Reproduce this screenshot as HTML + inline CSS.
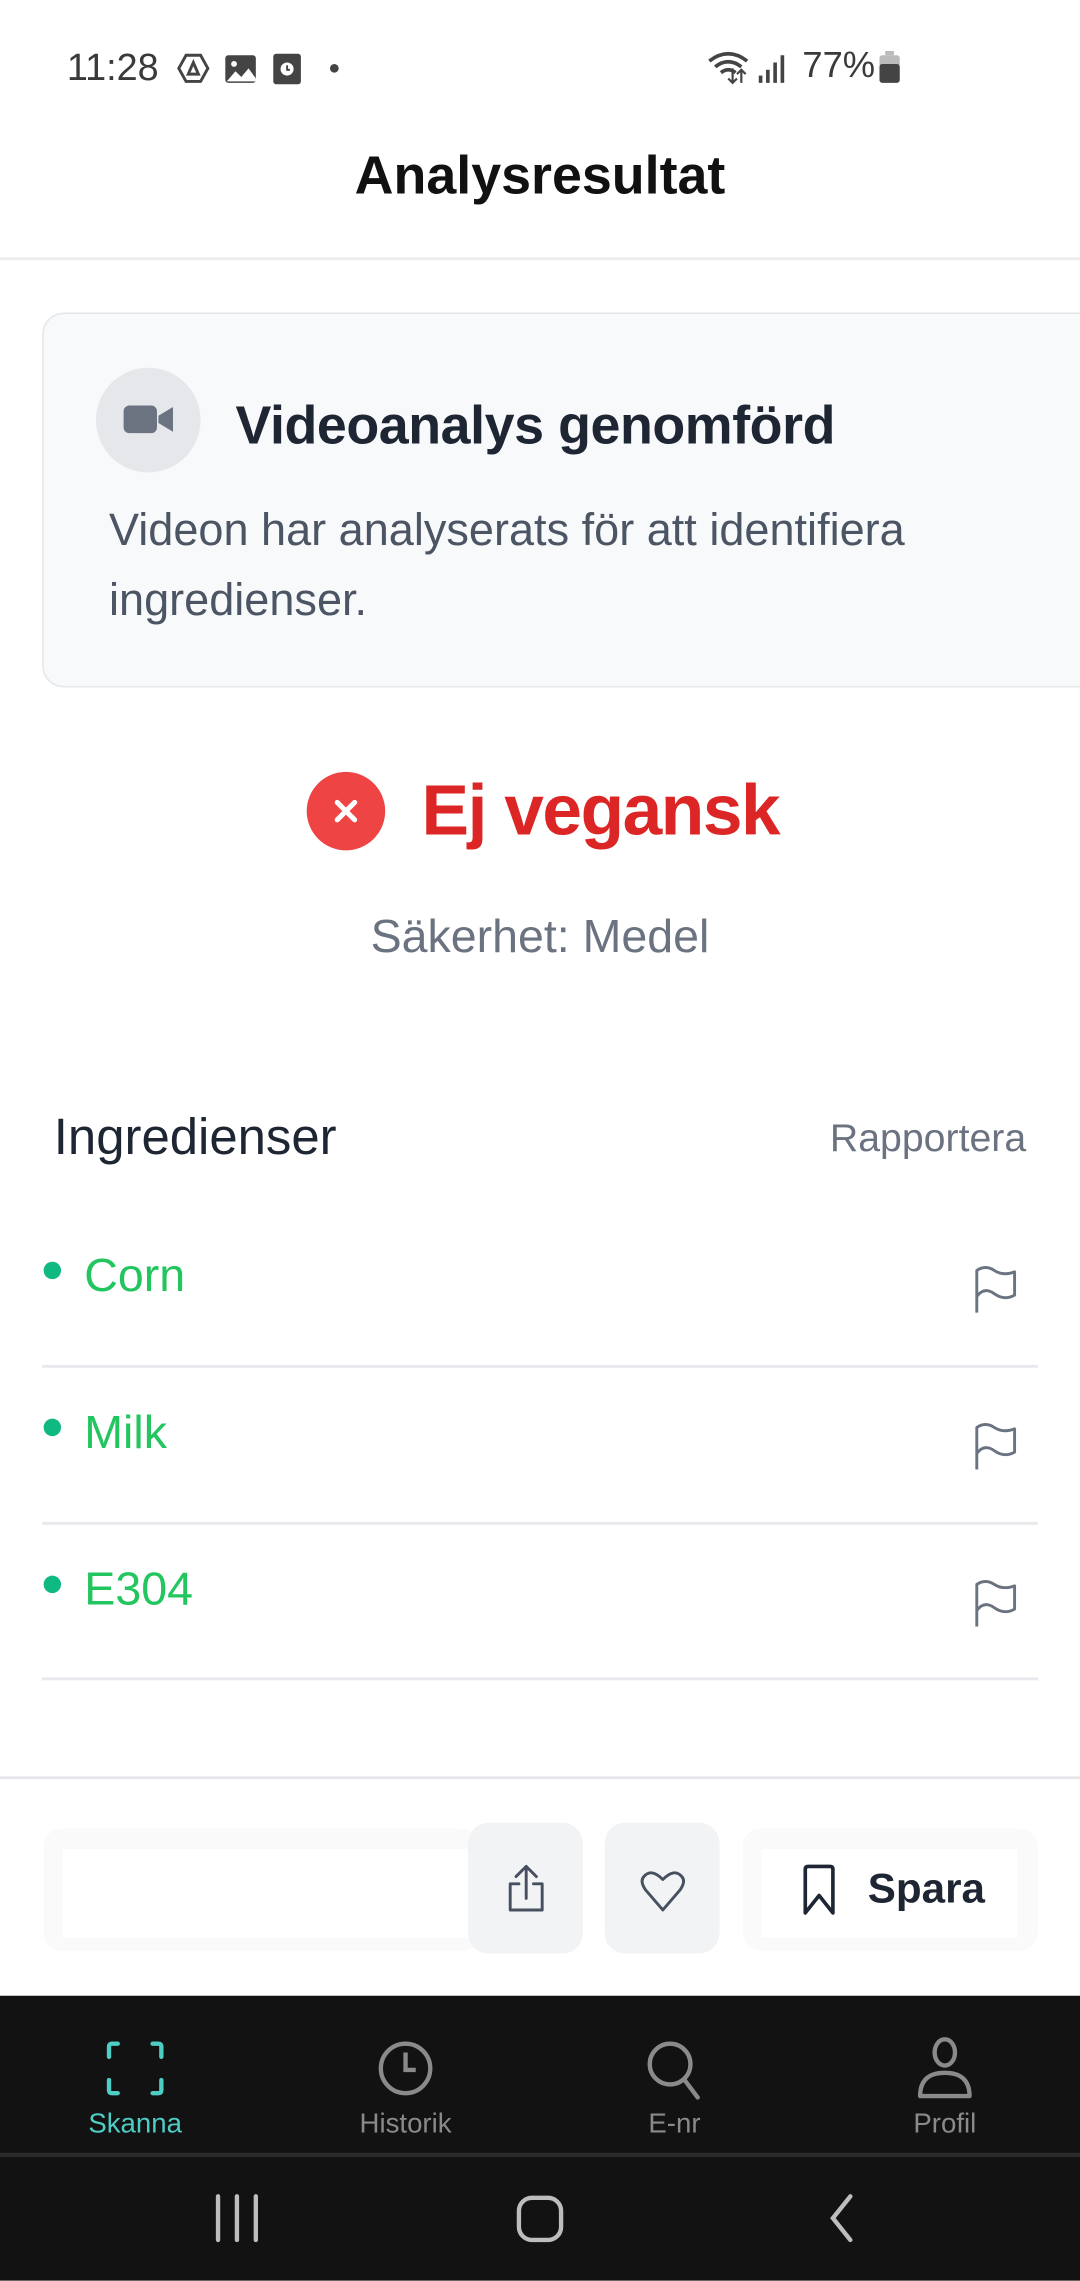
<!DOCTYPE html>
<html><head><meta charset="utf-8"><style>
html,body{margin:0;padding:0;background:#fff;}
body{width:1080px;height:2280px;overflow:hidden;position:relative;font-family:"Liberation Sans",sans-serif;}
#s{position:absolute;left:0;top:0;width:743px;height:1569px;transform:scale(1.45357);transform-origin:0 0;}
.a{position:absolute;white-space:nowrap;}
</style></head><body><div id="s">
<!-- status bar -->
<div class="a" style="left:46px;top:31px;font-size:26px;color:#3a3a3a;">11:28</div>
<svg class="a" style="left:121px;top:35px" width="120" height="24" viewBox="0 0 120 24">
<path d="M7 3 L17 3 L22 12 L17 21 L7 21 L2 12 Z" fill="none" stroke="#444" stroke-width="2"/><path d="M12 8 L15.5 16 L8.5 16 Z" fill="none" stroke="#444" stroke-width="2"/>
<rect x="34" y="3" width="21" height="19" rx="2" fill="#444"/><circle cx="40" cy="9" r="2" fill="#fff"/><path d="M35 21 L41 14 L45 18 L50 12 L55 19 L55 21 Z" fill="#fff"/>
<rect x="67" y="2" width="19" height="21" rx="2" fill="#444"/><circle cx="76.5" cy="12.5" r="4.5" fill="#fff"/><path d="M76.5 10v3h2" stroke="#444" stroke-width="1.3" fill="none"/>
<circle cx="109" cy="12" r="3" fill="#444"/></svg>
<svg class="a" style="left:486px;top:33px" width="60" height="26" viewBox="0 0 60 26">
<path d="M2 9 Q15 -1 28 9" stroke="#444" stroke-width="2.5" fill="none"/><path d="M6 13 Q15 6 24 13" stroke="#444" stroke-width="2.5" fill="none"/><path d="M10 17 Q15 13 20 17" stroke="#444" stroke-width="2.5" fill="none"/>
<path d="M18 14v10M15 21l3 3 3-3M24 24v-9M21 18l3-3 3 3" stroke="#444" stroke-width="1.5" fill="none"/>
<rect x="36" y="19" width="2.5" height="5" fill="#444"/><rect x="41" y="15" width="2.5" height="9" fill="#444"/><rect x="46" y="10" width="2.5" height="14" fill="#444"/><rect x="51" y="5" width="2.5" height="19" fill="#444"/></svg>
<div class="a" style="left:552px;top:31px;font-size:25px;color:#3a3a3a;">77%</div>
<svg class="a" style="left:605px;top:35px" width="16" height="24"><rect x="4" y="0" width="6" height="3" fill="#bbb"/><rect x="0" y="3" width="14" height="8" rx="2" fill="#bbb"/><rect x="0" y="9" width="14" height="13" rx="2" fill="#444"/></svg>
<!-- header -->
<div class="a" style="left:0;width:743px;text-align:center;top:100px;font-size:37px;font-weight:bold;color:#111;">Analysresultat</div>
<div class="a" style="left:0;top:177px;width:743px;height:2px;background:#ececef;"></div>
<!-- card -->
<div class="a" style="left:29px;top:215px;width:760px;height:256px;border:1.5px solid #e3e5e9;border-radius:15px;background:#f8f9fb;"></div>
<div class="a" style="left:66px;top:253px;width:72px;height:72px;border-radius:50%;background:#e5e7eb;"></div>
<svg class="a" style="left:85px;top:277px" width="36" height="24"><rect x="0" y="2" width="23" height="19" rx="4" fill="#6b7280"/><path d="M24 9 L34 3 L34 20 L24 14 Z" fill="#6b7280"/></svg>
<div class="a" style="left:162px;top:272px;font-size:37px;font-weight:bold;color:#1e2533;letter-spacing:-0.3px;">Videoanalys genomförd</div>
<div class="a" style="left:75px;top:341px;font-size:31px;line-height:48px;color:#4b5563;white-space:normal;width:640px;">Videon har analyserats för att identifiera ingredienser.</div>
<!-- verdict -->
<div class="a" style="left:211px;top:531px;width:54px;height:54px;border-radius:50%;background:#ef4444;"></div>
<svg class="a" style="left:211px;top:531px" width="54" height="54"><path d="M21 21L33 33M33 21L21 33" stroke="#fff" stroke-width="3.5" stroke-linecap="round"/></svg>
<div class="a" style="left:290px;top:530px;font-size:49px;font-weight:bold;color:#dc2626;letter-spacing:-1px;">Ej vegansk</div>
<div class="a" style="left:0;width:743px;text-align:center;top:626px;font-size:32px;color:#6b7280;">Säkerhet: Medel</div>
<!-- ingredients -->
<div class="a" style="left:37px;top:763px;font-size:35px;color:#1e2533;">Ingredienser</div>
<div class="a" style="right:37px;top:768px;font-size:27px;color:#6b7280;">Rapportera</div>

<div class="a" style="left:30px;top:868px;width:12px;height:12px;border-radius:50%;background:#10b981;"></div>
<div class="a" style="left:58px;top:859px;font-size:32px;color:#22c55e;">Corn</div>
<svg class="a" style="left:668px;top:870px" width="34" height="34" viewBox="0 0 34 34"><path d="M4 33V4Q10 0 16 4T30 5V21Q23 25 16 20T4 22" fill="none" stroke="#6b7280" stroke-width="2" stroke-linejoin="round"/></svg>
<div class="a" style="left:29px;top:939px;width:685px;height:1.5px;background:#e8e9ec;"></div>

<div class="a" style="left:30px;top:976px;width:12px;height:12px;border-radius:50%;background:#10b981;"></div>
<div class="a" style="left:58px;top:967px;font-size:32px;color:#22c55e;">Milk</div>
<svg class="a" style="left:668px;top:978px" width="34" height="34" viewBox="0 0 34 34"><path d="M4 33V4Q10 0 16 4T30 5V21Q23 25 16 20T4 22" fill="none" stroke="#6b7280" stroke-width="2" stroke-linejoin="round"/></svg>
<div class="a" style="left:29px;top:1047px;width:685px;height:1.5px;background:#e8e9ec;"></div>

<div class="a" style="left:30px;top:1084px;width:12px;height:12px;border-radius:50%;background:#10b981;"></div>
<div class="a" style="left:58px;top:1075px;font-size:32px;color:#22c55e;">E304</div>
<svg class="a" style="left:668px;top:1086px" width="34" height="34" viewBox="0 0 34 34"><path d="M4 33V4Q10 0 16 4T30 5V21Q23 25 16 20T4 22" fill="none" stroke="#6b7280" stroke-width="2" stroke-linejoin="round"/></svg>
<div class="a" style="left:29px;top:1154px;width:685px;height:1.5px;background:#e8e9ec;"></div>

<div class="a" style="left:0;top:1222px;width:743px;height:2px;background:#e5e7eb;"></div>
<!-- action bar -->
<div class="a" style="left:30px;top:1258px;width:300px;height:84px;border-radius:12px;background:#fafafa;"></div>
<div class="a" style="left:43px;top:1272px;width:285px;height:61px;background:#fff;"></div>
<div class="a" style="left:322px;top:1254px;width:79px;height:90px;border-radius:14px;background:#f2f3f5;"></div>
<svg class="a" style="left:346px;top:1282px" width="32" height="36" viewBox="0 0 32 36"><path d="M16 24V2M9 9L16 2L23 9M11 14H5V32H27V14H21" fill="none" stroke="#475060" stroke-width="2" stroke-linejoin="round" stroke-linecap="round"/></svg>
<div class="a" style="left:416px;top:1254px;width:79px;height:90px;border-radius:14px;background:#f2f3f5;"></div>
<svg class="a" style="left:440px;top:1286px" width="32" height="30" viewBox="0 0 32 30"><path d="M16 28L4 14Q0 8 3 5Q8 -1 16 7Q24 -1 29 5Q32 8 28 14Z" fill="none" stroke="#475060" stroke-width="2" stroke-linejoin="round"/></svg>
<div class="a" style="left:511px;top:1258px;width:203px;height:84px;border-radius:12px;background:#fafafa;"></div>
<div class="a" style="left:524px;top:1272px;width:176px;height:61px;background:#fff;"></div>
<svg class="a" style="left:551px;top:1282px" width="26" height="36" viewBox="0 0 26 36"><path d="M3 34V4Q3 2 5 2H20Q22 2 22 4V34L12.5 22Z" fill="none" stroke="#1e2533" stroke-width="2.5" stroke-linejoin="round"/></svg>
<div class="a" style="left:597px;top:1284px;font-size:29px;font-weight:bold;color:#1e2533;">Spara</div>
<!-- tab bar -->
<div class="a" style="left:0;top:1373px;width:743px;height:196px;background:#121212;"></div>
<div class="a" style="left:0;top:1481px;width:743px;height:3px;background:#2b2b2b;"></div>
<svg class="a" style="left:72px;top:1403px" width="42" height="40" viewBox="0 0 42 40"><path d="M3 12V5Q3 3 5 3H9M33 3H37Q39 3 39 5V12M39 28V35Q39 37 37 37H33M9 37H5Q3 37 3 35V28" fill="none" stroke="#4ecdc4" stroke-width="3" stroke-linecap="round"/></svg>
<div class="a" style="left:33px;width:120px;text-align:center;top:1451px;font-size:19px;color:#4ecdc4;">Skanna</div>
<svg class="a" style="left:259px;top:1403px" width="40" height="40" viewBox="0 0 40 40"><circle cx="20" cy="20" r="17" fill="none" stroke="#8a8a8a" stroke-width="3"/><path d="M20 9V21H27" fill="none" stroke="#8a8a8a" stroke-width="3"/></svg>
<div class="a" style="left:219px;width:120px;text-align:center;top:1451px;font-size:19px;color:#8a8a8a;">Historik</div>
<svg class="a" style="left:444px;top:1403px" width="42" height="42" viewBox="0 0 42 42"><circle cx="17" cy="17" r="14" fill="none" stroke="#8a8a8a" stroke-width="3"/><path d="M27 28L36 40" stroke="#8a8a8a" stroke-width="3" stroke-linecap="round"/></svg>
<div class="a" style="left:404px;width:120px;text-align:center;top:1451px;font-size:19px;color:#8a8a8a;">E-nr</div>
<svg class="a" style="left:630px;top:1400px" width="40" height="46" viewBox="0 0 40 46"><ellipse cx="20" cy="12" rx="7" ry="9" fill="none" stroke="#8a8a8a" stroke-width="3"/><path d="M3 42Q3 26 20 26Q37 26 37 42Z" fill="none" stroke="#8a8a8a" stroke-width="3" stroke-linejoin="round"/></svg>
<div class="a" style="left:590px;width:120px;text-align:center;top:1451px;font-size:19px;color:#8a8a8a;">Profil</div>
<!-- system nav -->
<svg class="a" style="left:145px;top:1505px" width="460" height="42" viewBox="0 0 460 42"><path d="M5 6V36M18 6V36M31 6V36" stroke="#bdbdbd" stroke-width="3" stroke-linecap="round"/><rect x="212" y="7" width="29" height="29" rx="9" fill="none" stroke="#bdbdbd" stroke-width="3"/><path d="M440 6L428 21L440 36" fill="none" stroke="#bdbdbd" stroke-width="3" stroke-linecap="round"/></svg>
</div></body></html>
